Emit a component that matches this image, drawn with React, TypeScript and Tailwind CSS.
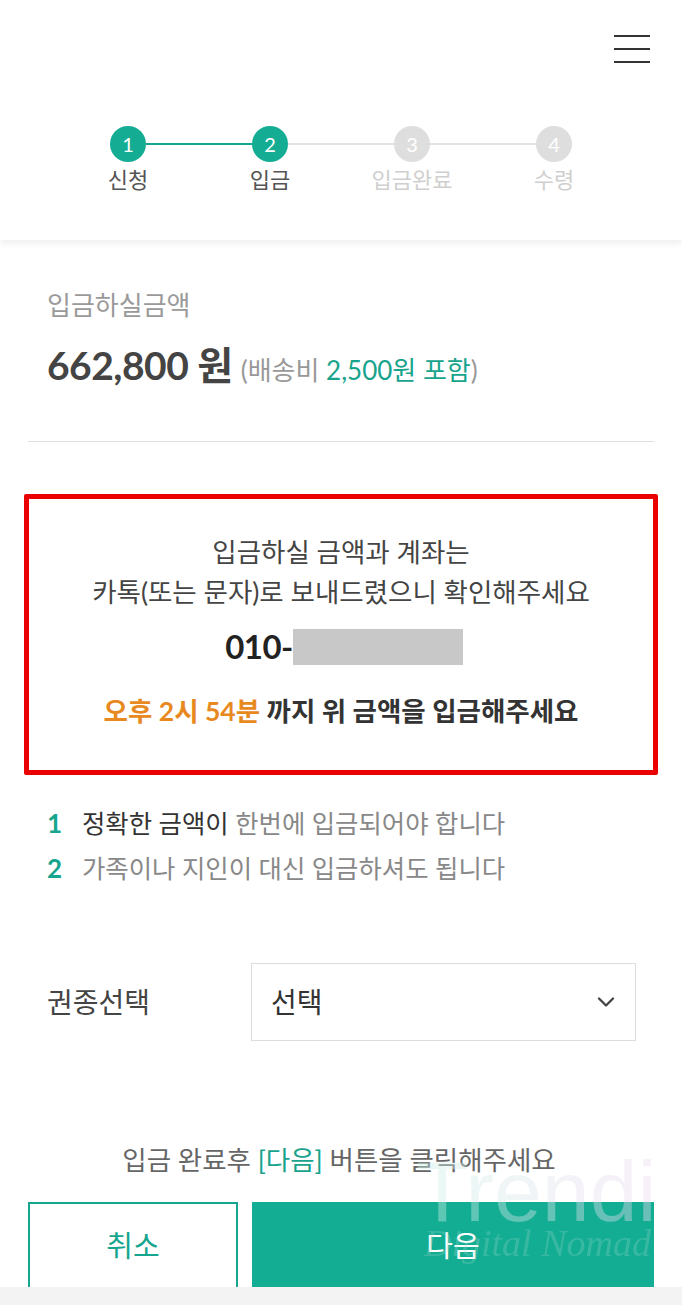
import { ChevronDown } from 'lucide-react';

const steps = [
  { n: 1, label: '신청', done: true },
  { n: 2, label: '입금', done: true },
  { n: 3, label: '입금완료', done: false },
  { n: 4, label: '수령', done: false },
];

const font = "font-['Lato','Noto_Sans_CJK_KR',sans-serif]";

export default function App() {
  return (
    <div className={`relative w-[682px] h-[1305px] overflow-hidden bg-white ${font}`}>
      {/* header + stepper */}
      <header className="relative h-[240px] bg-white shadow-[0_4px_6px_rgba(0,0,0,0.06)] z-10">
        <div className="flex justify-end pr-[32px] pt-[35px]">
          <div className="flex flex-col gap-[11px] w-[36px]">
            <span className="h-[2px] bg-[#333]" />
            <span className="h-[2px] bg-[#333]" />
            <span className="h-[2px] bg-[#333]" />
          </div>
        </div>
        <div className="grid grid-cols-4 px-[57px] mt-[63px]">
          {steps.map((s, i) => (
            <div key={s.n} className="relative flex flex-col items-center">
              {i < steps.length - 1 && (
                <div
                  className={`absolute top-[17px] left-1/2 w-full h-[2px] ${
                    s.n < 2 ? 'bg-[#16a58e]' : 'bg-[#e2e2e2]'
                  }`}
                />
              )}
              <div
                className={`relative z-10 w-[36px] h-[36px] rounded-full flex items-center justify-center text-white text-[20px] ${
                  s.done ? 'bg-[#14ad93]' : 'bg-[#dedede]'
                }`}
              >
                {s.n}
              </div>
              <span
                className={`mt-[3px] text-[22px] leading-[30px] ${
                  s.done ? 'text-[#555]' : 'text-[#cfcfcf]'
                }`}
              >
                {s.label}
              </span>
            </div>
          ))}
        </div>
      </header>

      {/* amount */}
      <section className="px-[47px] pt-[48px]">
        <p className="text-[26px] leading-[34px] text-[#9a9a9a]">입금하실금액</p>
        <p className="mt-[14px] flex items-baseline gap-[8px]">
          <span className="text-[39px] font-bold text-[#444] tracking-[-0.5px]">662,800 원</span>
          <span className="text-[26px] text-[#999]">
            (배송비 <span className="text-[#18a38d]">2,500원 포함</span>)
          </span>
        </p>
      </section>
      <div className="mx-[28px] mt-[46px] h-px bg-[#e0e0e0]" />

      {/* notice box */}
      <div className="mx-[24px] mt-[52px] h-[281px] border-[5px] border-[#ea0000] rounded-[2px] flex flex-col items-center pt-[33px] text-[#444]">
        <p className="text-[26.5px] leading-[40px] text-center">
          입금하실 금액과 계좌는
          <br />
          카톡(또는 문자)로 보내드렸으니 확인해주세요
        </p>
        <div className="mt-[16px] flex items-center h-[38px] pl-[6px]">
          <span className="text-[33px] font-bold text-[#222] tracking-[-0.5px]">010-</span>
          <span className="w-[170px] h-[36px] bg-[#c8c8c8]" />
        </div>
        <p className="mt-[26px] text-[26.5px] font-bold text-[#333]">
          <span className="text-[#e8891f]">오후 2시 54분</span> 까지 위 금액을 입금해주세요
        </p>
      </div>

      {/* rules */}
      <ol className="px-[47px] mt-[29px] flex flex-col gap-[7px] text-[25.4px] leading-[38px]">
        <li className="flex items-baseline gap-[20px]">
          <span className="w-[15px] text-[26px] text-[#16a58e] font-bold">1</span>
          <span className="text-[#888]">
            <span className="text-[#333]">정확한 금액이</span> 한번에 입금되어야 합니다
          </span>
        </li>
        <li className="flex items-baseline gap-[20px]">
          <span className="w-[15px] text-[26px] text-[#16a58e] font-bold">2</span>
          <span className="text-[#888]">가족이나 지인이 대신 입금하셔도 됩니다</span>
        </li>
      </ol>

      {/* select */}
      <div className="flex items-center px-[47px] mt-[76px] pr-[46px]">
        <span className="w-[204px] text-[28px] text-[#444]">권종선택</span>
        <div className="flex-1 h-[78px] border border-[#dcdcdc] flex items-center justify-between pl-[19px] pr-[15px]">
          <span className="text-[28px] text-[#333]">선택</span>
          <ChevronDown className="w-[28px] h-[28px] text-[#444]" strokeWidth={2} />
        </div>
      </div>

      {/* footer */}
      <p className="mt-[100px] text-center text-[26.5px] text-[#666] pr-[4px]">
        입금 완료후 <span className="text-[#18a38d]">[다음]</span> 버튼을 클릭해주세요
      </p>
      <div className="flex gap-[14px] px-[28px] mt-[22px]">
        <button className="w-[210px] h-[100px] border-2 border-[#16a58e] text-[#16a58e] text-[29px] bg-white pb-[14px]">
          취소
        </button>
        <button className="flex-1 h-[100px] bg-[#13ad93] text-white text-[29px] pb-[14px]">다음</button>
      </div>

      {/* bottom bar */}
      <div className="absolute left-0 right-0 bottom-0 h-[18px] bg-[#f3f3f3]" />

      {/* watermark */}
      <div className="absolute left-[416px] top-[1143px] pointer-events-none select-none">
        <div className="text-[86px] leading-[96px] font-['Liberation_Sans',sans-serif] text-transparent bg-clip-text bg-gradient-to-r from-[#c9f1e6] to-[#efd9f2] opacity-40">
          Trendi
        </div>
        <div className="-mt-[24px] ml-[8px] text-[38px] italic font-['Liberation_Serif',serif] text-[#a8dccf] opacity-25">
          Digital Nomad
        </div>
      </div>
    </div>
  );
}
